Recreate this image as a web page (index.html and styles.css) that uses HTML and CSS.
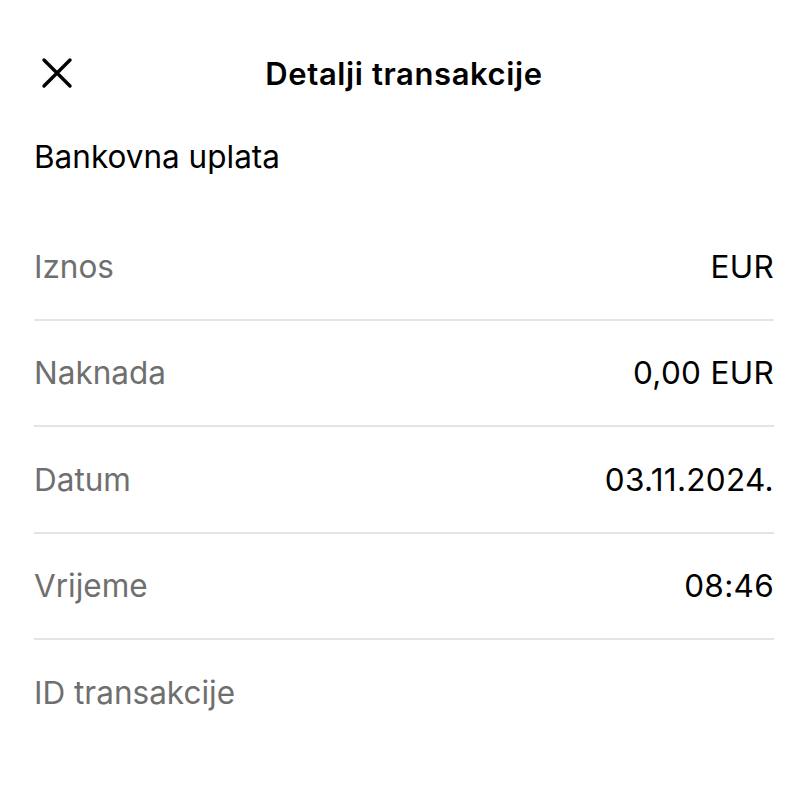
FILE: index.html
```html
<html>
<head>
    <meta charset="UTF-8">
    <meta name="viewport" content="width=device-width, initial-scale=1.0">
    <title>Detalji transakcije</title>
    <link rel="stylesheet" href="styles.css">
</head>
<body>
    <header class="top-bar">
        <button class="close-btn" aria-label="Zatvori">
            <svg width="32" height="32" viewBox="0 0 32 32">
                <path d="M3 3 L29 29 M29 3 L3 29" stroke="#000" stroke-width="3.4" stroke-linecap="round" fill="none"/>
            </svg>
        </button>
        <h1 class="title">Detalji transakcije</h1>
        <div></div>
    </header>

    <div class="type">Bankovna uplata</div>

    <div class="details">
        <div class="row">
            <span class="label">Iznos</span>
            <span class="value">EUR</span>
        </div>
        <div class="row">
            <span class="label">Naknada</span>
            <span class="value">0,00 EUR</span>
        </div>
        <div class="row">
            <span class="label">Datum</span>
            <span class="value">03.11.2024.</span>
        </div>
        <div class="row">
            <span class="label">Vrijeme</span>
            <span class="value">08:46</span>
        </div>
        <div class="row">
            <span class="label">ID transakcije</span>
            <span class="value"></span>
        </div>
    </div>
</body>
</html>
```

FILE: styles.css
```css
body {
    margin: 0;
    padding: 0 34px;
    background-color: #fff;
    font-family: Inter, "Noto Sans", sans-serif;
    color: #000;
}

.top-bar {
    height: 100px;
    margin-top: 23px;
    display: grid;
    grid-template-columns: 1fr auto 1fr;
    align-items: center;
}

.close-btn {
    background: none;
    border: none;
    padding: 0;
    margin-left: 7px;
    width: 32px;
    height: 32px;
    cursor: pointer;
}

.close-btn svg {
    display: block;
}

.title {
    margin: 0;
    font-size: 31px;
    font-weight: 600;
    letter-spacing: 0.6px;
}

.type {
    font-size: 31.5px;
    height: 91px;
    line-height: 68px;
}

.details {
    display: flex;
    flex-direction: column;
}

.row {
    height: 104.5px;
    display: flex;
    justify-content: space-between;
    align-items: center;
    border-bottom: 2px solid #e4e4e4;
    font-size: 31.5px;
}

.row:last-child {
    border-bottom: none;
}

.label {
    color: #6f6f6f;
}

.value {
    color: #000;
    letter-spacing: 0.3px;
}
```
